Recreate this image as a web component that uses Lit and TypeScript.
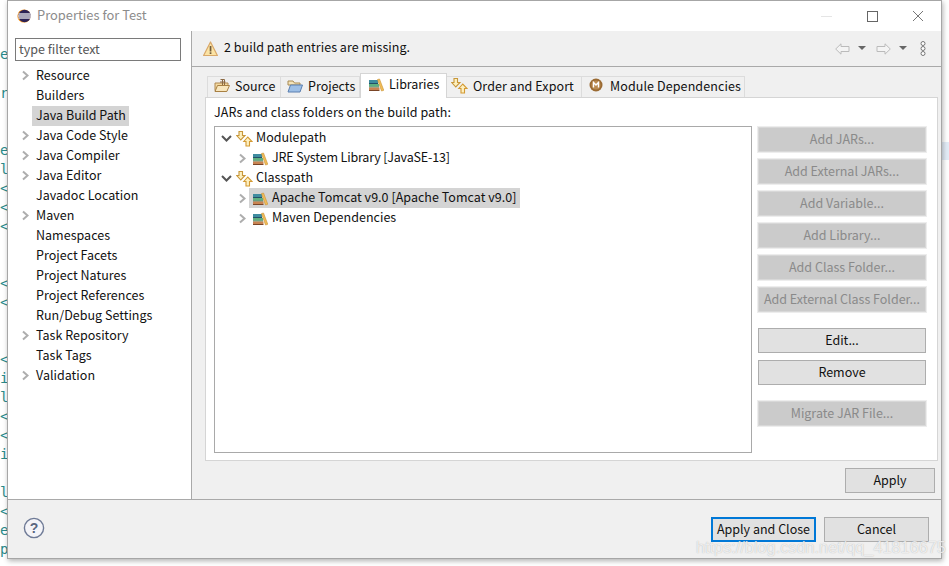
import { LitElement, html, css, svg } from "lit";
import { customElement } from "lit/decorators.js";

const chev = html`<svg class="chev" width="9" height="11" viewBox="0 0 9 11"><path d="M2 1.5 L6.5 5.5 L2 9.5" fill="none" stroke="#aeaeae" stroke-width="2"/></svg>`;
const chevDown = html`<svg class="chev" width="11" height="9" viewBox="0 0 11 9"><path d="M1 2 L5.5 6.5 L10 2" fill="none" stroke="#555" stroke-width="2"/></svg>`;
const libIcon = html`<svg class="ico" width="16" height="16" viewBox="0 0 16 16">
  <rect x="1" y="4" width="9" height="3" fill="#3f8ca0"/><rect x="1" y="7" width="9" height="1" fill="#24506a"/>
  <rect x="1" y="8" width="10" height="2.5" fill="#5fb080"/><rect x="1" y="10.5" width="10" height="1" fill="#357a55"/>
  <rect x="1" y="11.5" width="10.5" height="2.5" fill="#c98452"/><rect x="1" y="14" width="10.5" height="1" fill="#7a4526"/>
  <path d="M9.5 3.5 L11.5 3 L15.8 14.3 L13.5 15 Z" fill="#f2bd58" stroke="#c89234" stroke-width=".6"/>
</svg>`;
const orderIcon = html`<svg class="ico" width="17" height="17" viewBox="0 0 17 17">
  <path d="M3 1.5 H6.5 V5.5 H9 L4.8 10 L.8 5.5 H3 Z" fill="#fdf0c0" stroke="#c7973a" stroke-width="1.1"/>
  <path d="M10 16 H13.5 V11.5 H16 L11.8 7 L7.8 11.5 H10 Z" fill="#fdf0c0" stroke="#d39a33" stroke-width="1.1"/>
</svg>`;
const srcIcon = html`<svg class="ico" width="16" height="16" viewBox="0 0 16 16">
  <path d="M1 5 H14 V8 L12.5 13.5 H1.5 L1 12 Z" fill="#f3d9a0" stroke="#b08850"/>
  <path d="M1 13.5 L3.5 7.5 H15.5 L12.8 13.5 Z" fill="#f8e6bd" stroke="#a88043"/>
  <path d="M6.5 1.5 H10.5 V7 M6 4 H11.5 M8.5 1.5 V7" fill="none" stroke="#8c6a44"/>
</svg>`;
const prjIcon = html`<svg class="ico" width="16" height="16" viewBox="0 0 16 16">
  <path d="M1 3 H6 L7.5 5 H13 V7 H1 Z" fill="#f4e3b8" stroke="#a88a52"/>
  <path d="M1 14 L3.5 7 H15.5 L13 14 Z" fill="#9dbfe6" stroke="#5a7fb0"/>
</svg>`;
const modIcon = html`<svg class="ico mod" width="14" height="14" viewBox="0 0 14 14">
  <circle cx="7" cy="7" r="6.5" fill="#9a6a32"/><circle cx="7" cy="7" r="4.6" fill="#b98a50"/>
  <path d="M4.5 9.5 V4.5 L7 7 L9.5 4.5 V9.5" fill="none" stroke="#fff" stroke-width="1.4"/>
</svg>`;
const warnIcon = html`<svg width="15" height="16" viewBox="0 0 15 16"><path d="M7.5 1 L14.4 14.5 H.6 Z" fill="#fbe3a4" stroke="#d9a869" stroke-linejoin="round" stroke-width="1.2"/><rect x="6.7" y="5" width="1.7" height="5.5" fill="#6f5a3c"/><rect x="6.7" y="11.3" width="1.7" height="1.7" fill="#6f5a3c"/></svg>`;
const logo = html`<svg width="14" height="14" viewBox="0 0 14 14"><circle cx="7" cy="7" r="6.6" fill="#f7941e"/><circle cx="7.6" cy="7" r="6.2" fill="#2c2255"/><rect x="1.4" y="4.4" width="12.4" height="1.2" fill="#fff"/><rect x="1" y="6.4" width="13" height="1.2" fill="#fff"/><rect x="1.4" y="8.4" width="12.4" height="1.2" fill="#fff"/></svg>`;
const arrowL = svg`<path d="M.7 6 L6 .8 V3.5 H14 V8.5 H6 V11.2 Z" fill="#f4f4f4" stroke="#bbb"/>`;
const arrowR = svg`<path d="M14.3 6 L9 .8 V3.5 H1 V8.5 H9 V11.2 Z" fill="#f4f4f4" stroke="#bbb"/>`;

const navItems: [string, boolean, boolean?][] = [
  ["Resource", true], ["Builders", false], ["Java Build Path", false, true], ["Java Code Style", true],
  ["Java Compiler", true], ["Java Editor", true], ["Javadoc Location", false], ["Maven", true],
  ["Namespaces", false], ["Project Facets", false], ["Project Natures", false], ["Project References", false],
  ["Run/Debug Settings", false], ["Task Repository", true], ["Task Tags", false], ["Validation", true],
];
const bgLetters: [string, number][] = [
  ["e", 55], ["r", 94], ["e", 151], ["l", 170], ["<", 189], ["<", 208], ["<", 227], ["<", 284], ["<", 303],
  ["<", 360], ["i", 379], ["l", 398], ["<", 417], ["<", 436], ["i", 455], ["l", 493], ["<", 512], ["e", 531], ["p", 550],
];

@customElement("app-root")
export class AppRoot extends LitElement {
  static styles = css`
    :host { display: block; position: relative; width: 949px; height: 566px; overflow: hidden; background: #fff;
      font-family: "Noto Sans CJK SC", "Noto Sans", sans-serif; font-size: 12.5px; color: #111; }
    .bgl { position: absolute; left: 0; width: 7px; overflow: hidden; font: 14px "DejaVu Sans Mono", monospace; color: #2a8a8a; line-height: 16px; }
    .hl { position: absolute; left: 941px; top: 142px; width: 8px; height: 18px; background: #e3ecf7; }
    .win { position: absolute; left: 7px; top: 0; width: 935px; height: 559px; box-sizing: border-box; border: 1px solid #a6a6a6; background: #f0f0f0;
      display: flex; flex-direction: column; box-shadow: 1px 2px 5px rgba(0,0,0,.3); }
    .title { height: 30px; background: #fff; display: flex; align-items: center; padding: 0 0 0 9px; gap: 6px; color: #8c8c8c; font-size: 12.9px; flex: none; line-height: 26px; }
    .title .t { flex: 1; padding-bottom: 2px; }
    .wbtns { display: flex; align-items: center; gap: 0; }
    .wb { width: 46px; height: 30px; display: flex; align-items: center; justify-content: center; }
    .main { flex: 1; display: flex; min-height: 0; }
    .side { width: 183px; flex: none; background: #fff; border-right: 1px solid #a9a9a9; padding: 7px 0 0 0; }
    .filter { margin-left: 7px; width: 166px; height: 23px; box-sizing: border-box; border: 1px solid #7a7a7a; padding-left: 3px; line-height: 20px; color: #555; }
    .tree { margin-top: 5px; display: flex; flex-direction: column; }
    .nav { height: 20px; display: flex; position: relative; padding-left: 28px; }
    .nav .chev { position: absolute; left: 13px; top: 4px; }
    .nav span { display: block; height: 20px; box-sizing: border-box; line-height: 18px; letter-spacing: .02px; }
    .nav span.sel { background: #d4d4d4; margin-left: -4px; padding: 0 3px 0 4px; }
    .content { flex: 1; min-width: 0; display: flex; flex-direction: column; }
    .hdr { height: 35px; flex: none; border-bottom: 1px solid #a9a9a9; display: flex; align-items: center; padding-left: 11px; gap: 6px; }
    .hdr .msg { flex: 1; padding-bottom: 5px; letter-spacing: .03px; }
    .tool { display: flex; align-items: center; margin-right: 15px; gap: 0; }
    .pane { flex: 1; padding: 8px 3px 0 13px; display: flex; flex-direction: column; min-height: 0; }
    .tabs { display: flex; height: 22px; flex: none; position: relative; z-index: 1; align-items: flex-end; margin-left: 2px; }
    .tab { height: 21px; box-sizing: border-box; border: 1px solid #dcdcdc; border-bottom: none; border-left: none; padding: 0 0 3px 6px; display: flex; align-items: center; gap: 5px; background: #f0f0f0; }
    .tab:first-child { border-left: 1px solid #dcdcdc; }
    .tab.on { height: 25px; background: #fff; border: 1px solid #d5d5d5; border-bottom: none; margin-bottom: -1px; padding: 0 0 5px 7px; }
    .t1 { width: 74px; } .t2 { width: 79px; } .t3 { width: 87px; letter-spacing: -.04px; }
    .t4 { width: 135px; padding-left: 4px; letter-spacing: .08px; } .t5 { width: 163px; padding-left: 7px; gap: 7px; letter-spacing: .1px; }
    .tab .ico { flex: none; }
    .tab .mod { margin-top: -1px; }
    .box { height: 364px; box-sizing: border-box; border: 1px solid #d5d5d5; background: #fff; padding: 7px 10px 7px 8px; display: flex; flex-direction: column; }
    .lbl { height: 16px; line-height: 14px; letter-spacing: .08px; }
    .cols { display: flex; flex: 1; gap: 5px; margin-top: 5px; min-height: 0; }
    .list { width: 538px; box-sizing: border-box; border: 1px solid #a9a9a9; flex: none; height: 327px; padding-top: 1px; }
    .row { height: 20px; display: flex; align-items: center; position: relative; line-height: 18px; }
    .row .tw { width: 13px; display: flex; justify-content: center; flex: none; }
    .lab { display: block; padding-bottom: 2px; }
    .lab.tight { letter-spacing: -.15px; }
    .r0 { padding-left: 5px; gap: 3px; }
    .r1 { padding-left: 21px; }
    .r1 .inner { display: flex; align-items: center; height: 20px; gap: 4px; padding: 0 2px 0 3px; letter-spacing: .03px; }
    .r1 .inner.sel { background: #d4d4d4; padding-right: 3px; }
    .btns { width: 168px; flex: none; display: flex; flex-direction: column; margin-left: 1px; padding-top: 1px; }
    .b { height: 25px; box-sizing: border-box; display: flex; align-items: center; justify-content: center; border: 1px solid #adadad; background: #e1e1e1; flex: none; padding-bottom: 2px; }
    .b.dis { background: #cbcbcb; border: 1px solid #d8d8d8; color: #8a8a8a; outline: 1px solid #ededed; }
    .stack { display: flex; flex-direction: column; gap: 7px; }
    .g1 { margin-top: 16px; } .g2 { margin-top: 16px; }
    .applyRow { display: flex; justify-content: flex-end; padding: 7px 3px 0 0; flex: none; }
    .applyRow .b { width: 90px; }
    .foot { height: 59px; flex: none; border-top: 1px solid #a9a9a9; display: flex; align-items: flex-start; padding: 17px 12px 0 15px; box-sizing: border-box; }
    .foot .help { flex: 1; }
    .foot .b.pri { width: 105px; border: 2px solid #0078d7; }
    .foot .b.can { width: 105px; margin-left: 8px; }
    .wm { position: absolute; left: 696px; top: 538px; font: 16.3px "Liberation Sans", sans-serif; color: rgba(255,255,255,.75); text-shadow: 0 0 1px rgba(120,120,120,.55); white-space: nowrap; }
  `;
  render() {
    return html`
      ${bgLetters.map(([c, y]) => html`<div class="bgl" style="top:${y - 9}px">${c}</div>`)}
      <div class="hl"></div>
      <div class="win">
        <div class="title">${logo}<span class="t">Properties for Test</span>
          <div class="wbtns">
            <div class="wb"><svg width="11" height="1"><rect width="11" height="1" fill="#e5e5e5"/></svg></div>
            <div class="wb"><svg width="11" height="11"><rect x=".5" y=".5" width="10" height="10" fill="none" stroke="#666"/></svg></div>
            <div class="wb"><svg width="12" height="12"><path d="M1 1 L11 11 M11 1 L1 11" stroke="#777" stroke-width="1" fill="none"/></svg></div>
          </div>
        </div>
        <div class="main">
          <div class="side">
            <div class="filter">type filter text</div>
            <div class="tree">
              ${navItems.map(([t, c, s]) => html`<div class="nav">${c ? chev : ""}<span class=${s ? "sel" : ""}>${t}</span></div>`)}
            </div>
          </div>
          <div class="content">
            <div class="hdr">${warnIcon}<span class="msg">2 build path entries are missing.</span>
              <div class="tool">
                <svg width="15" height="12" viewBox="0 0 15 12">${arrowL}</svg>
                <svg width="9" height="5" style="margin:0 9px 0 8px"><path d="M0 0 H8 L4 4 Z" fill="#666"/></svg>
                <svg width="15" height="12" viewBox="0 0 15 12">${arrowR}</svg>
                <svg width="9" height="5" style="margin:0 12px 0 8px"><path d="M0 0 H8 L4 4 Z" fill="#666"/></svg>
                <svg width="6" height="15" viewBox="0 0 6 15"><g fill="#fff" stroke="#777"><circle cx="3" cy="2.5" r="2"/><circle cx="3" cy="7.5" r="2"/><circle cx="3" cy="12.5" r="2"/></g></svg>
              </div>
            </div>
            <div class="pane">
              <div class="tabs">
                <div class="tab t1">${srcIcon}<span>Source</span></div>
                <div class="tab t2">${prjIcon}<span>Projects</span></div>
                <div class="tab on t3">${libIcon}<span>Libraries</span></div>
                <div class="tab t4">${orderIcon}<span>Order and Export</span></div>
                <div class="tab t5">${modIcon}<span>Module Dependencies</span></div>
              </div>
              <div class="box">
                <div class="lbl">JARs and class folders on the build path:</div>
                <div class="cols">
                  <div class="list">
                    <div class="row r0"><span class="tw">${chevDown}</span>${orderIcon}<span class="lab">Modulepath</span></div>
                    <div class="row r1"><span class="tw">${chev}</span><span class="inner">${libIcon}<span class="lab tight">JRE System Library [JavaSE-13]</span></span></div>
                    <div class="row r0"><span class="tw">${chevDown}</span>${orderIcon}<span class="lab">Classpath</span></div>
                    <div class="row r1"><span class="tw">${chev}</span><span class="inner sel">${libIcon}<span class="lab">Apache Tomcat v9.0 [Apache Tomcat v9.0]</span></span></div>
                    <div class="row r1"><span class="tw">${chev}</span><span class="inner">${libIcon}<span class="lab">Maven Dependencies</span></span></div>
                  </div>
                  <div class="btns">
                    <div class="stack">
                      ${["Add JARs...", "Add External JARs...", "Add Variable...", "Add Library...", "Add Class Folder...", "Add External Class Folder..."].map(t => html`<div class="b dis">${t}</div>`)}
                    </div>
                    <div class="stack g1"><div class="b">Edit...</div><div class="b">Remove</div></div>
                    <div class="stack g2"><div class="b dis">Migrate JAR File...</div></div>
                  </div>
                </div>
              </div>
              <div class="applyRow"><div class="b">Apply</div></div>
            </div>
          </div>
        </div>
        <div class="foot">
          <div class="help"><svg width="22" height="22" viewBox="0 0 22 22"><circle cx="11" cy="11" r="9.6" fill="#f4f4f8" stroke="#6e7a96" stroke-width="1.4"/><text x="11" y="16" text-anchor="middle" font-size="14" font-weight="700" font-family="Liberation Sans" fill="#5a6680">?</text></svg></div>
          <div class="b pri">Apply and Close</div>
          <div class="b can">Cancel</div>
        </div>
      </div>
      <div class="wm">https://blog.csdn.net/qq_41816675</div>
    `;
  }
}
